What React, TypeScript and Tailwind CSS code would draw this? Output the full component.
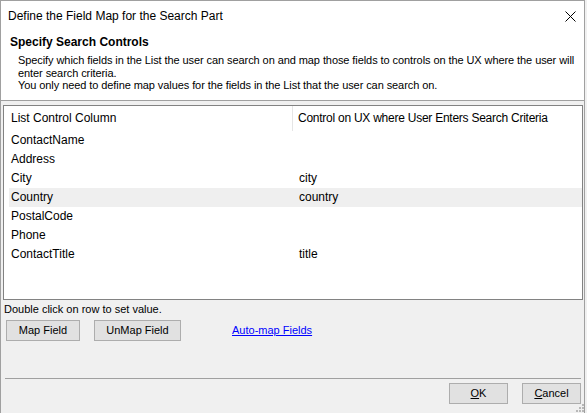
import React from "react";

const rows: [string, string][] = [
  ["ContactName", ""],
  ["Address", ""],
  ["City", "city"],
  ["Country", "country"],
  ["PostalCode", ""],
  ["Phone", ""],
  ["ContactTitle", "title"],
];

function WinButton({ children, width }: { children: React.ReactNode; width: string }) {
  return (
    <button
      className={`${width} h-[21px] bg-[#e1e1e1] border border-[#adadad] text-[11px] leading-none text-black flex items-center justify-center`}
    >
      {children}
    </button>
  );
}

export default function App() {
  return (
    <div
      className="w-[587px] h-[413px] bg-[#f0f0f0] overflow-hidden text-[12px] text-black"
      style={{ fontFamily: '"Liberation Sans", Arial, sans-serif' }}
    >
      <div className="relative w-[585px] h-[413px] border-l border-t border-r border-[#a0a0a0] flex flex-col">
        {/* Title bar + header */}
        <div className="bg-white border-b border-[#a0a0a0]">
          <div className="h-[30px] flex items-center justify-between pl-[7px] pr-[8px]">
            <span>Define the Field Map for the Search Part</span>
            <svg width="11" height="11" viewBox="0 0 11 11">
              <path d="M0.5 0.5 L10.5 10.5 M10.5 0.5 L0.5 10.5" stroke="#000" strokeWidth="1" fill="none" />
            </svg>
          </div>
          <div className="pt-[4px] pb-[8px]">
            <div className="pl-[9px] font-bold leading-[14px]">Specify Search Controls</div>
            <div className="pl-[17px] mt-[5px] text-[11px] leading-[12.5px] whitespace-nowrap tracking-[-0.08px]">
              <p>
                Specify which fields in the List the user can search on and map those fields to controls on the UX
                where the user will
                <br />
                enter search criteria.
              </p>
              <p>You only need to define map values for the fields in the List that the user can search on.</p>
            </div>
          </div>
        </div>

        {/* List */}
        <div className="ml-[2px] mt-[4px] w-[580px] h-[195px] border border-[#828282] bg-white pl-[5px]">
          <div className="flex h-[25px] items-center">
            <div className="w-[284px] pl-[2px] h-full flex items-center border-r border-[#e5e5e5]">
              List Control Column
            </div>
            <div className="pl-[5px] tracking-[-0.25px]">Control on UX where User Enters Search Criteria</div>
          </div>
          {rows.map(([name, ctrl]) => (
            <div key={name} className={`flex h-[19px] items-center ${name === "Country" ? "bg-[#efefef]" : ""}`}>
              <div className="w-[284px] pl-[2px]">{name}</div>
              <div className="pl-[6px]">{ctrl}</div>
            </div>
          ))}
        </div>

        <div className="pl-[3px] mt-[2px] text-[11px] leading-[14px]">Double click on row to set value.</div>

        <div className="flex items-center mt-[4px] ml-[5px] text-[11px]">
          <WinButton width="w-[74px]">Map Field</WinButton>
          <div className="ml-[14px]">
            <WinButton width="w-[87px]">UnMap Field</WinButton>
          </div>
          <a className="ml-[51px] text-[#0000ff] underline">Auto-map Fields</a>
        </div>

        <div className="mt-[37px] ml-[4px] w-[576px] border-t border-[#a0a0a0]" />

        <div className="flex justify-end gap-[14px] mt-[4px] pr-[3px]">
          <WinButton width="w-[59px]">
            <span>
              <span className="underline">O</span>K
            </span>
          </WinButton>
          <WinButton width="w-[59px]">
            <span>
              <span className="underline">C</span>ancel
            </span>
          </WinButton>
        </div>

        {/* size grip */}
        <svg className="absolute right-[0px] bottom-[1px]" width="8" height="8" viewBox="0 0 8 8">
          <rect x="6" y="0" width="2" height="2" fill="#b8b8b8" />
          <rect x="3" y="3" width="2" height="2" fill="#b8b8b8" />
          <rect x="6" y="3" width="2" height="2" fill="#b8b8b8" />
          <rect x="0" y="6" width="2" height="2" fill="#b8b8b8" />
          <rect x="3" y="6" width="2" height="2" fill="#b8b8b8" />
          <rect x="6" y="6" width="2" height="2" fill="#b8b8b8" />
        </svg>
      </div>
    </div>
  );
}
